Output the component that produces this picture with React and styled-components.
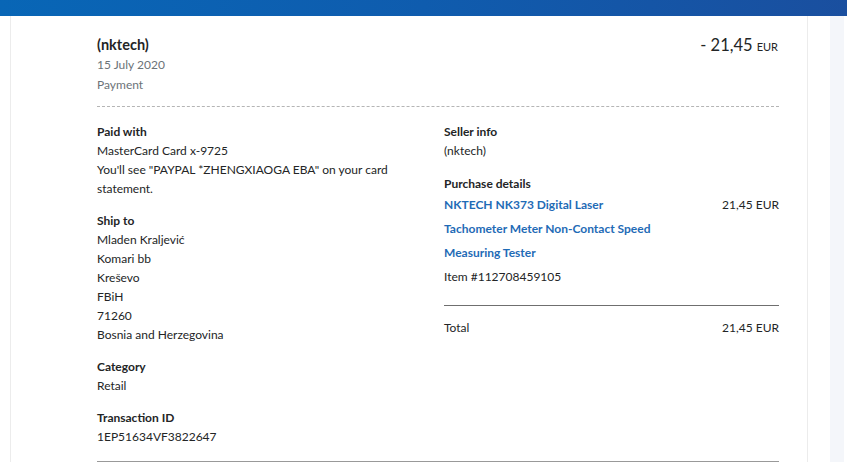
import React from 'react';
import styled, { createGlobalStyle } from 'styled-components';

const GlobalStyle = createGlobalStyle`
  body {
    margin: 0;
    background: #fff;
    font-family: 'Lato', 'Open Sans', sans-serif;
    color: #232526;
  }
`;

const TopBar = styled.div`
  height: 16px;
  background: linear-gradient(90deg, #0866b6 0%, #0f5cae 50%, #1a4f9f 100%);
`;

const Page = styled.div`
  display: flex;
  align-items: stretch;
  height: 446px;
  overflow: hidden;
`;

const Card = styled.div`
  margin-left: 10px;
  width: 798px;
  border-left: 1px solid #ececec;
  border-right: 1px solid #ececec;
  padding: 19px 28px 0 86px;
  box-sizing: border-box;
`;

const SideStrip = styled.div`
  margin-left: 22px;
  width: 14px;
  background: #f4f6fa;
`;

const Header = styled.div`
  display: flex;
  justify-content: space-between;
  align-items: flex-start;
  padding-bottom: 12px;
  border-bottom: 1px dashed #b5b5b5;
`;

const Title = styled.div`
  font-size: 14.5px;
  font-weight: 700;
  line-height: 20px;
`;

const Muted = styled.div`
  font-size: 12px;
  line-height: 19.5px;
  color: #6c7378;
`;

const Amount = styled.div`
  font-size: 16.5px;
  line-height: 20px;
  margin-right: 1px;
`;

const Currency = styled.span`
  font-size: 11px;
  margin-left: 4px;
`;

const Columns = styled.div`
  display: grid;
  grid-template-columns: 300px 1fr;
  column-gap: 47px;
  padding-top: 15px;
`;

const Column = styled.div`
  display: flex;
  flex-direction: column;
`;

const Section = styled.div`
  margin-bottom: 13px;
`;

const Heading = styled.div`
  font-size: 12px;
  font-weight: 700;
  line-height: 19px;
`;

const Line = styled.div`
  font-size: 12px;
  line-height: ${p => p.$lh || 19}px;
`;

const ItemRow = styled.div`
  display: flex;
  justify-content: space-between;
  align-items: flex-start;
`;

const ItemLink = styled.a`
  color: #1f6bb6;
  font-size: 12px;
  font-weight: 700;
  line-height: 24px;
  text-decoration: none;
  width: 218px;
`;

const Price = styled.div`
  font-size: 12px;
  line-height: 24px;
`;

const Divider = styled.div`
  border-top: 1px solid #6f6f6f;
  margin: 16px 0 12px;
`;

const TotalRow = styled.div`
  display: flex;
  justify-content: space-between;
  font-size: 12px;
  line-height: 19px;
`;

const BottomRule = styled.div`
  border-top: 1px solid #999;
  margin-top: 2px;
`;

export default function App() {
  return (
    <>
      <GlobalStyle />
      <TopBar />
      <Page>
        <Card>
          <Header>
            <div>
              <Title>(nktech)</Title>
              <Muted>15 July 2020</Muted>
              <Muted>Payment</Muted>
            </div>
            <Amount>
              - 21,45<Currency>EUR</Currency>
            </Amount>
          </Header>
          <Columns>
            <Column>
              <Section>
                <Heading>Paid with</Heading>
                <Line>MasterCard Card x-9725</Line>
                <Line>You'll see "PAYPAL *ZHENGXIAOGA EBA" on your card statement.</Line>
              </Section>
              <Section>
                <Heading>Ship to</Heading>
                <Line>Mladen Kraljević</Line>
                <Line>Komari bb</Line>
                <Line>Kreševo</Line>
                <Line>FBiH</Line>
                <Line>71260</Line>
                <Line>Bosnia and Herzegovina</Line>
              </Section>
              <Section>
                <Heading>Category</Heading>
                <Line>Retail</Line>
              </Section>
              <Section>
                <Heading>Transaction ID</Heading>
                <Line>1EP51634VF3822647</Line>
              </Section>
            </Column>
            <Column>
              <Section>
                <Heading>Seller info</Heading>
                <Line $lh={20}>(nktech)</Line>
              </Section>
              <div>
                <Heading>Purchase details</Heading>
                <ItemRow>
                  <ItemLink href="#">NKTECH NK373 Digital Laser Tachometer Meter Non-Contact Speed Measuring Tester</ItemLink>
                  <Price>21,45 EUR</Price>
                </ItemRow>
                <Line $lh={24}>Item #112708459105</Line>
                <Divider />
                <TotalRow>
                  <span>Total</span>
                  <span>21,45 EUR</span>
                </TotalRow>
              </div>
            </Column>
          </Columns>
          <BottomRule />
        </Card>
        <SideStrip />
      </Page>
    </>
  );
}
